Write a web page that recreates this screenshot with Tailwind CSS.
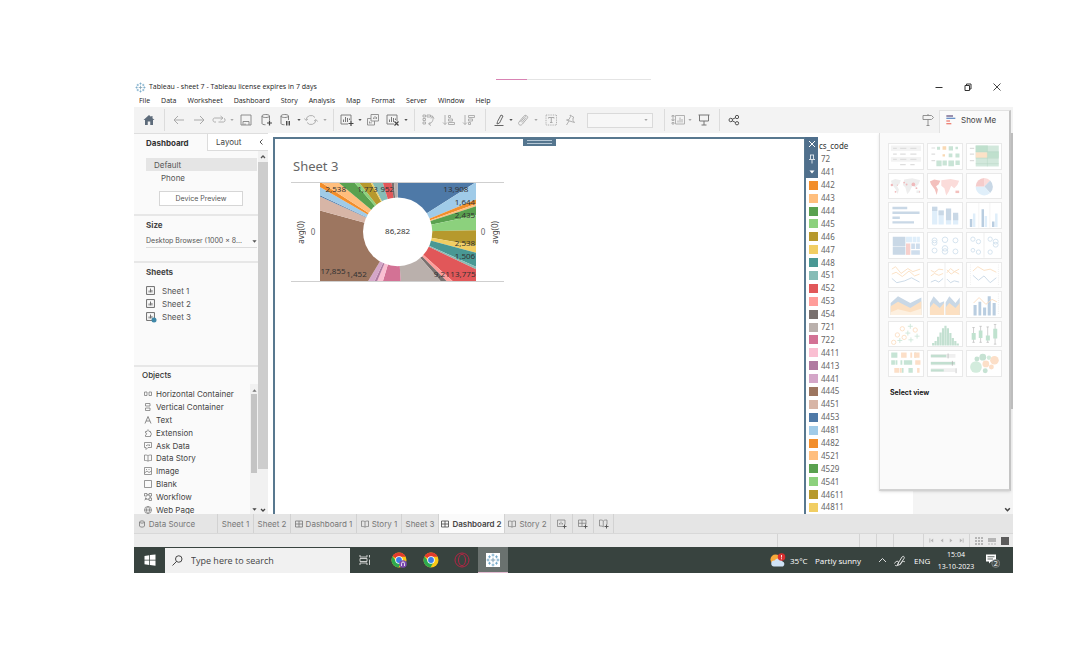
<!DOCTYPE html>
<html lang="en">
<head>
<meta charset="utf-8">
<title>Tableau - sheet 7</title>
<script src="https://cdn.jsdelivr.net/npm/@tailwindcss/browser@4"></script>
</head>
<body class="bg-white">
<svg class="hidden" aria-hidden="true">
  <defs>
    <symbol id="caret" viewBox="0 0 4 4"><path d="M.3 1h3.4L2 3z" fill="currentColor"/></symbol>
    <symbol id="grid4" viewBox="0 0 16 16"><path d="M1 2h14v12H1zM8 2v12M1 8h14" fill="none" stroke="currentColor" stroke-width="1.6"/></symbol>
    <symbol id="book" viewBox="0 0 16 16"><path d="M8 3.500C6.500 2 4 2 1 2v11c3 0 5.500 0 7 1.500C9.500 13 12 13 15 13V2c-3 0-5.500 0-7 1.500zM8 3.500v11" fill="none" stroke="currentColor" stroke-width="1.5"/></symbol>
    <symbol id="sheet" viewBox="0 0 16 16"><path d="M1 1h14v14H1z" fill="none" stroke="currentColor" stroke-width="1.5"/><path d="M5.500 11.500V8M8 11.500V4.500M10.500 11.500V7" stroke="currentColor" stroke-width="1.5"/></symbol>
    <symbol id="chartbox" viewBox="0 0 28 28"><path d="M22 16V4H2v18h14" fill="none" stroke="currentColor" stroke-width="1.8"/><path d="M7 18v-5M11 18V8M15 18v-8M19 14v-3" stroke="currentColor" stroke-width="2"/></symbol>
    <symbol id="cyl" viewBox="0 0 28 28"><path d="M4 6c0-4 15-4 15 0v8M4 6v15c0 1.500 3 2.500 7 2.500M4 6c0 4 15 4 15 0" fill="none" stroke="currentColor" stroke-width="1.8"/></symbol>
    <symbol id="tableau" viewBox="0 0 24 24"><path d="M12 8v8M8 12h8" stroke="#7d9db0" stroke-width="1.600"/><path d="M12 1v5M9.500 3.500h5M12 18v5M9.500 20.500h5M3.500 9.500v5M1 12h5M20.500 9.500v5M18 12h5M6 4v5M3.500 6.500h5M18 4v5M15.500 6.500h5M6 15v5M3.500 17.500h5M18 15v5M15.500 17.500h5" stroke="#5f9cc0" stroke-width="1.300"/></symbol>
    <symbol id="chrome" viewBox="0 0 32 32"><circle cx="16" cy="16" r="15" fill="#fbc916"/><path d="M16 16L3 8.500A15 15 0 0 1 29.500 9.500H16z" fill="#e33b2e"/><path d="M3 8.500A15 15 0 0 0 15 31l6.500-11.500L16 16l-5.500 3z" fill="#2da94f"/><circle cx="16" cy="16" r="7.500" fill="#fff"/><circle cx="16" cy="16" r="5.800" fill="#3a7ee8"/></symbol>
  </defs>
</svg>

<div class="min-h-screen pt-[79px] pb-[83px] pl-[134px] pr-[65px] flex flex-col font-['Inter',sans-serif] text-[8px] leading-[10px] text-[#555]">
  <div class="flex h-px ml-[362px] w-[155px] bg-[#e4e4e4]"><div class="w-[31px] bg-[#d883b3]"></div></div>

  <header class="font-['Open_Sans',sans-serif] text-[7px] text-[#222]">
    <div class="h-[14px] flex items-center">
      <svg class="w-[11px] h-[11px] ml-px mr-[3px]"><use href="#tableau"/></svg>
      <h1>Tableau - sheet 7 - Tableau license expires in 7 days</h1>
      <div class="ml-auto flex items-center gap-[19px] mr-[11px] text-[#333]">
        <button aria-label="Minimize"><svg class="block w-[10px] h-[10px]" viewBox="0 0 10 10"><path d="M1.500 5.500h7" stroke="currentColor"/></svg></button>
        <button aria-label="Restore"><svg class="block w-[10px] h-[10px]" viewBox="0 0 10 10" fill="none" stroke="currentColor"><path d="M2 3.500h4.500v5H2zM3.500 3.500V2H8v5H6.500"/></svg></button>
        <button aria-label="Close"><svg class="block w-[10px] h-[10px]" viewBox="0 0 10 10"><path d="M1.500 1.500l7 7M8.500 1.500l-7 7" stroke="currentColor" stroke-width=".9"/></svg></button>
      </div>
    </div>
    <nav class="h-[13px] flex items-center pl-[5px] gap-[11px]">
      <button>File</button><button>Data</button><button>Worksheet</button><button>Dashboard</button><button>Story</button><button>Analysis</button><button>Map</button><button>Format</button><button>Server</button><button>Window</button><button>Help</button>
    </nav>
  </header>

  <div class="h-[26px] bg-[#f3f3f3] flex items-center pl-2 text-[#a9a9a9] shrink-0">
    <button aria-label="Home" class="text-[#5d6b7a]"><svg class="w-[14px] h-[14px]" viewBox="0 0 28 28"><path d="M14 4L3 14h3v10h5.500v-7h5v7H22V14h3l-4-3.700V6h-2.500v2z" fill="currentColor"/></svg></button>
    <i class="w-px h-[22px] bg-[#dcdcdc] ml-2"></i>
    <button aria-label="Undo" class="ml-[7px]"><svg class="w-[14px] h-[14px]" viewBox="0 0 28 28" fill="none" stroke="currentColor" stroke-width="2"><path d="M24 14H5M12 6l-8 8 8 8"/></svg></button>
    <button aria-label="Redo" class="ml-[6px]"><svg class="w-[14px] h-[14px]" viewBox="0 0 28 28" fill="none" stroke="currentColor" stroke-width="2"><path d="M4 14h19M16 6l8 8-8 8"/></svg></button>
    <button aria-label="Replay" class="ml-[6px]"><svg class="w-[14px] h-[14px]" viewBox="0 0 28 28" fill="none" stroke="currentColor" stroke-width="1.800"><path d="M8 18H5c-4 0-4-8 0-8h16M17 6l5 4-5 4M13 18h10c4 0 4-7 1-7.500"/></svg></button>
    <svg class="w-1 h-1 ml-1"><use href="#caret"/></svg>
    <button aria-label="Save" class="ml-[5px] text-[#858585]"><svg class="w-[14px] h-[14px]" viewBox="0 0 28 28" fill="none" stroke="currentColor" stroke-width="1.800"><path d="M4 4h20v20H4zM8 24v-7h12v7M12 24v-3"/></svg></button>
    <button aria-label="New data source" class="ml-[7px] text-[#777]"><svg class="w-[14px] h-[14px]" viewBox="0 0 28 28"><use href="#cyl"/><path d="M19 15v10M14 20h10" stroke="#444" stroke-width="2.400"/></svg></button>
    <button aria-label="Pause updates" class="ml-[5px] text-[#777]"><svg class="w-[14px] h-[14px]" viewBox="0 0 28 28"><use href="#cyl"/><path d="M15.500 16v9M20.500 16v9" stroke="#444" stroke-width="2.800"/></svg></button>
    <svg class="w-1 h-1 ml-1 text-[#555]"><use href="#caret"/></svg>
    <button aria-label="Refresh" class="ml-[3px]"><svg class="w-[14px] h-[14px]" viewBox="0 0 28 28" fill="none" stroke="currentColor" stroke-width="1.800"><path d="M4 14a10 10 0 0 1 18-5M24 14a10 10 0 0 1-18 5M1 11l3 4 4-3M27 17l-3-4-4 3"/></svg></button>
    <svg class="w-1 h-1 ml-[5px]"><use href="#caret"/></svg>
    <i class="w-px h-[22px] bg-[#dcdcdc] ml-[6px]"></i>
    <button aria-label="New worksheet" class="ml-[6px] text-[#777]"><svg class="w-[14px] h-[14px]" viewBox="0 0 28 28"><use href="#chartbox"/><path d="M22 16v10M17 21h10" stroke="#444" stroke-width="2.400"/></svg></button>
    <svg class="w-1 h-1 ml-1 text-[#555]"><use href="#caret"/></svg>
    <button aria-label="Duplicate" class="ml-1 text-[#8a8a8a]"><svg class="w-[14px] h-[14px]" viewBox="0 0 28 28" fill="none" stroke="currentColor" stroke-width="1.800"><path d="M10 3h15v13H10zM10 11H3v13h14v-8M15 12V9M18 12V6M21 12V8M7 21v-4M10 21v-3"/></svg></button>
    <button aria-label="Clear sheet" class="ml-[6px] text-[#777]"><svg class="w-[14px] h-[14px]" viewBox="0 0 28 28"><use href="#chartbox"/><path d="M17 17l8 8M25 17l-8 8" stroke="#444" stroke-width="2.400"/></svg></button>
    <svg class="w-1 h-1 ml-1 text-[#555]"><use href="#caret"/></svg>
    <i class="w-px h-[22px] bg-[#dcdcdc] ml-[6px]"></i>
    <button aria-label="Swap" class="ml-[6px]"><svg class="w-[14px] h-[14px]" viewBox="0 0 28 28" fill="none" stroke="currentColor" stroke-width="1.800"><path d="M4 4h5v4H4zM12 4h7v4h-7zM4 11h5v4H4zM4 18h5v4H4zM19 6h4c3 6 0 14-7 16M19 18l-4 4 5 3M20 11l3-4 3 4"/></svg></button>
    <button aria-label="Sort ascending" class="ml-[7px]"><svg class="w-[14px] h-[14px]" viewBox="0 0 28 28" fill="none" stroke="currentColor" stroke-width="1.800"><path d="M6 4v19M2 19l4 4 4-4M13 5h4v4h-4zM13 12h8v4h-8zM13 19h12v4H13z"/></svg></button>
    <button aria-label="Sort descending" class="ml-[6px]"><svg class="w-[14px] h-[14px]" viewBox="0 0 28 28" fill="none" stroke="currentColor" stroke-width="1.800"><path d="M6 4v19M2 19l4 4 4-4M13 5h12v4H13zM13 12h8v4h-8zM13 19h4v4h-4z"/></svg></button>
    <i class="w-px h-[22px] bg-[#dcdcdc] ml-[9px]"></i>
    <button aria-label="Highlight" class="ml-[7px] text-[#666]"><svg class="w-[14px] h-[14px]" viewBox="0 0 28 28" fill="none" stroke="currentColor" stroke-width="2"><path d="M16 4l4 2-7 14-5 2 1-5zM3 25h18"/></svg></button>
    <svg class="w-1 h-1 ml-[2px] text-[#555]"><use href="#caret"/></svg>
    <button aria-label="Group" class="ml-[3px]"><svg class="w-[14px] h-[14px]" viewBox="0 0 28 28" fill="none" stroke="currentColor" stroke-width="1.800"><path d="M9 18l9-11c3-3 7 0 5 3L13 22c-4 5-10 1-7-4L15 7c2-3 5-3 6-1M12 19l8-10"/></svg></button>
    <svg class="w-1 h-1 ml-1"><use href="#caret"/></svg>
    <button aria-label="Show mark labels" class="ml-[6px]"><svg class="w-[14px] h-[14px]" viewBox="0 0 28 28" fill="none" stroke="currentColor" stroke-width="1.800"><path d="M4 4h21v20H4z" stroke-dasharray="2 1.500"/><path d="M9 11V9h11v2M14.500 9v10M12 19h5" stroke-width="2"/></svg></button>
    <button aria-label="Fix axes" class="ml-[5px]"><svg class="w-[14px] h-[14px]" viewBox="0 0 28 28" fill="none" stroke="currentColor" stroke-width="1.800"><path d="M14 4l8 5-2 1v5l3 4-16-5 5-1 3-6zM12 16l-5 8"/></svg></button>
    <div class="ml-[10px] h-[15px] w-[66px] border border-[#dadada] bg-[#f7f7f7] flex items-center justify-end pr-1">
      <select aria-label="Fit" class="appearance-none w-full h-full bg-transparent"><option></option></select>
      <svg class="w-1 h-1 shrink-0"><use href="#caret"/></svg>
    </div>
    <i class="w-px h-[22px] bg-[#dcdcdc] ml-[11px]"></i>
    <button aria-label="Show cards" class="ml-[6px]"><svg class="w-[14px] h-[14px]" viewBox="0 0 28 28" fill="none" stroke="currentColor" stroke-width="1.800"><path d="M2 5h4v3H2zM2 12h4v3H2zM2 19h4v3H2zM9 5h18v17H9zM14 19v-4M18 19V9M22 19v-7"/></svg></button>
    <svg class="w-1 h-1 ml-[3px]"><use href="#caret"/></svg>
    <button aria-label="Presentation mode" class="ml-[5px] text-[#777]"><svg class="w-[14px] h-[14px]" viewBox="0 0 28 28" fill="none" stroke="currentColor" stroke-width="2"><path d="M3 4h22M5 4v12h18V4M14 16v8M9 24h10"/></svg></button>
    <i class="w-px h-[22px] bg-[#dcdcdc] ml-2"></i>
    <button aria-label="Share" class="ml-[7px] text-[#555]"><svg class="w-[14px] h-[14px]" viewBox="0 0 28 28" fill="none" stroke="currentColor" stroke-width="2"><circle cx="7.500" cy="14" r="3.500"/><circle cx="20" cy="8" r="3.300"/><circle cx="20" cy="20.500" r="3.300"/><path d="M10.500 12.500l6.500-3M10.500 15.500l6.500 3.500"/></svg></button>
    <button aria-label="Guide" class="ml-auto text-[#888]"><svg class="w-[14px] h-[14px]" viewBox="0 0 28 28" fill="none" stroke="currentColor" stroke-width="1.800"><path d="M4 5h17l4 4-4 4H4zM14 2v3M14 13v12M11 25h6"/></svg></button>
    <button class="ml-1 mr-[2px] self-end h-[23px] w-[72px] bg-[#fafafa] border-l border-t border-[#e2e2e2] border-r-2 border-r-[#c4c4c4] flex items-center gap-[5px] pl-[6px] pb-1 text-[8px] text-[#444]">
      <svg class="w-[10px] h-[10px] shrink-0" viewBox="0 0 30 30"><path d="M1 3h20" stroke="#6b5b87" stroke-width="4"/><path d="M1 10h27" stroke="#6c93c9" stroke-width="4"/><path d="M1 18h11" stroke="#ee8377" stroke-width="4"/><path d="M1 26h15" stroke="#ee8377" stroke-width="4"/></svg>
      Show Me
    </button>
  </div>

  <main class="flex-1 min-h-0 flex relative overflow-hidden">
    <aside class="w-[134px] shrink-0 bg-[#fafafa] flex flex-col border-t border-[#dedede]">
      <div class="h-[17px] flex shrink-0">
        <button class="w-[73px] pl-[12px] text-left font-bold text-[#333]">Dashboard</button>
        <button class="flex-1 pl-2 text-left border-l border-b border-[#dcdcdc] bg-white text-[#444]">Layout</button>
        <button aria-label="Collapse" class="w-[14px] flex justify-center items-center border-b border-[#dcdcdc] bg-white"><svg class="w-[6px] h-[8px]" viewBox="0 0 6 8"><path d="M4.500 1.500L2 4l2.500 2.500" fill="none" stroke="#555"/></svg></button>
      </div>
      <div class="flex-1 flex min-h-0">
        <div class="flex-1 min-w-0 flex flex-col">
          <section class="h-[65px] pt-[7px] pl-3 pr-px border-b-2 border-[#e7e7e7]">
            <button class="block w-full h-[13px] bg-[#e5e5e5] text-left pl-2">Default</button>
            <button class="block w-full h-[13px] text-left pl-[15px]">Phone</button>
            <button class="block ml-[13px] mt-[7px] w-[84px] h-[15px] bg-white border border-[#d6d6d6] text-[7px]">Device Preview</button>
          </section>
          <section class="h-[47px] pt-[4px] pl-3 pr-px border-b-2 border-[#e7e7e7]">
            <label for="size" class="block font-bold text-[#444]">Size</label>
            <div class="flex items-center mt-[5px] h-[13px] border-b border-[#dcdcdc]">
              <select id="size" class="appearance-none flex-1 min-w-0 bg-transparent text-[7px]"><option>Desktop Browser (1000 x 8...</option></select>
              <svg class="w-[5px] h-[5px]"><use href="#caret"/></svg>
            </div>
          </section>
          <section class="h-[104px] pt-[4px] pl-3 border-b-2 border-[#e7e7e7]">
            <h2 class="font-bold text-[#444] mb-[7px]">Sheets</h2>
            <div class="flex items-center h-[13px] gap-[7px]"><svg class="w-[9px] h-[9px]"><use href="#sheet"/></svg>Sheet 1</div>
            <div class="flex items-center h-[13px] gap-[7px]"><svg class="w-[9px] h-[9px]"><use href="#sheet"/></svg>Sheet 2</div>
            <div class="flex items-center h-[13px] gap-[7px]"><svg class="w-[9px] h-[9px] overflow-visible"><use href="#sheet"/><circle cx="8" cy="8" r="2.500" fill="#3f88a8"/></svg>Sheet 3</div>
          </section>
          <section class="flex-1 min-h-0 flex flex-col pt-[3px]">
            <h2 class="font-medium text-[#333] pl-2 h-[14px]">Objects</h2>
            <div class="flex-1 flex min-h-0">
              <ul class="flex-1 flex flex-col pl-[10px] pt-[4px] -mb-[2px] text-[#444] *:flex *:flex-1 *:items-center *:gap-[4px] *:whitespace-nowrap">
                <li><svg class="w-2 h-2" viewBox="0 0 16 16" fill="none" stroke="#777" stroke-width="1.500"><path d="M1 4h5v7H1zM10 4h5v7h-5z"/></svg>Horizontal Container</li>
                <li><svg class="w-2 h-2" viewBox="0 0 16 16" fill="none" stroke="#777" stroke-width="1.500"><path d="M3 1h9v5H3zM3 10h9v5H3z"/></svg>Vertical Container</li>
                <li><svg class="w-2 h-2" viewBox="0 0 16 16" fill="none" stroke="#666" stroke-width="1.500"><path d="M2 15L8 1l6 14M4.500 10h7"/></svg>Text</li>
                <li><svg class="w-2 h-2" viewBox="0 0 16 16" fill="none" stroke="#777" stroke-width="1.500"><path d="M3 5h3c-1-4 5-4 4 0h3v3c4-1 4 5 0 4v3H3v-3c3 0 3-5 0-4z"/></svg>Extension</li>
                <li><svg class="w-2 h-2" viewBox="0 0 16 16" fill="none" stroke="#777" stroke-width="1.500"><path d="M1 1h14v10H8l-4 4v-4H1zM5 8V6M8 8V4M11 8V5"/></svg>Ask Data</li>
                <li><svg class="w-2 h-2 text-[#777]"><use href="#book"/></svg>Data Story</li>
                <li><svg class="w-2 h-2" viewBox="0 0 16 16" fill="none" stroke="#777" stroke-width="1.500"><path d="M1 1h14v14H1zM1 12l5-4 4 3 5-3M5 4v2M10 4v2"/></svg>Image</li>
                <li><svg class="w-2 h-2" viewBox="0 0 16 16" fill="none" stroke="#777" stroke-width="1.500"><path d="M1 1h14v14H1z"/></svg>Blank</li>
                <li><svg class="w-2 h-2" viewBox="0 0 16 16" fill="none" stroke="#777" stroke-width="1.500"><path d="M1 1h5v5H1zM10 1h5v5h-5zM10 10h5v5h-5zM6 3.500h4M12.500 6v4M10 12.500H3V9M1 14l5-4"/></svg>Workflow</li>
                <li><svg class="w-2 h-2" viewBox="0 0 16 16" fill="none" stroke="#777" stroke-width="1.500"><circle cx="8" cy="8" r="7"/><path d="M1 8h14M8 1c-4 3-4 11 0 14M8 1c4 3 4 11 0 14"/></svg>Web Page</li>
              </ul>
              <div class="w-2 bg-[#f1f1f1] flex flex-col items-center text-[#777]">
                <svg class="w-[5px] h-[5px] mt-1 mb-px rotate-180"><use href="#caret"/></svg>
                <div class="w-[6px] h-[79px] bg-[#c4c4c4]"></div>
                <svg class="w-[5px] h-[5px] mt-auto mb-[2px] text-[#444]"><use href="#caret"/></svg>
              </div>
            </div>
          </section>
        </div>
        <div class="w-[10px] bg-[#f1f1f1] flex flex-col items-center">
          <svg class="w-[6px] h-[6px] mt-[3px] mb-[2px]" viewBox="0 0 6 6"><path d="M1 4l2-2 2 2" fill="none" stroke="#555" stroke-width="1.300"/></svg>
          <div class="w-full h-[307px] bg-[#cdcdcd]"></div>
          <svg class="w-[6px] h-[6px] mt-auto mb-px" viewBox="0 0 6 6"><path d="M1 2l2 2 2-2" fill="none" stroke="#444" stroke-width="1.300"/></svg>
        </div>
      </div>
    </aside>

    <section class="ml-[5px] mt-[4px] w-[533px] shrink-0 border-2 border-b-0 border-[#58788f] relative font-['Noto_Sans',sans-serif]">
      <div class="absolute left-[248px] -top-[1px] w-[33px] h-[8px] bg-[#55768f] flex flex-col justify-center gap-[2px] px-1"><i class="h-px bg-[#b6c8d6]"></i><i class="h-px bg-[#b6c8d6]"></i></div>
      <h2 class="text-[13px] leading-[16px] text-[#666] pt-[19px] pl-[18px]">Sheet 3</h2>
      <div class="ml-4 mt-[8px] w-[213px] border-y border-[#cfcfcf] flex items-center text-[#666]">
        <span class="[writing-mode:vertical-rl] rotate-180 ml-[5px] w-[10px] text-[#444]">avg(0)</span>
        <span class="w-[14px] text-center">0</span>
        <svg class="w-[156px] h-[98px] font-['Noto_Sans',sans-serif]" viewBox="0 0 466 295" preserveAspectRatio="none">
          <g>
            <path fill="#4e79a7" d="M232 147V0H462z"/>
            <path fill="#a0cbe8" d="M232 147L462 0H466V50z"/>
            <path fill="#f28e2b" d="M232 147L466 50V63z"/>
            <path fill="#ffbe7d" d="M232 147L466 63V70z"/>
            <path fill="#59a14f" d="M232 147L466 70V97z"/>
            <path fill="#8cd17d" d="M232 147L466 97V142z"/>
            <path fill="#b6992d" d="M232 147L466 142V189z"/>
            <path fill="#f1ce63" d="M232 147L466 189V210z"/>
            <path fill="#499894" d="M232 147L466 210V252z"/>
            <path fill="#86bcb6" d="M232 147L466 252V260z"/>
            <path fill="#e15759" d="M232 147L466 260V295H396z"/>
            <path fill="#ff9d9a" d="M232 147L396 295H378z"/>
            <path fill="#79706e" d="M232 147L378 295H360z"/>
            <path fill="#bab0ac" d="M232 147L360 295H241z"/>
            <path fill="#d37295" d="M232 147L241 295H188z"/>
            <path fill="#fabfd2" d="M232 147L188 295H171z"/>
            <path fill="#b07aa1" d="M232 147L171 295H163z"/>
            <path fill="#d4a6c8" d="M232 147L163 295H144z"/>
            <path fill="#9d7660" d="M232 147L144 295H0V83z"/>
            <path fill="#d7b5a6" d="M232 147L0 83V41z"/>
            <path fill="#4e79a7" d="M232 147L0 41V37z"/>
            <path fill="#a0cbe8" d="M232 147L0 37V12z"/>
            <path fill="#f28e2b" d="M232 147L0 12V0H6z"/>
            <path fill="#ffbe7d" d="M232 147L6 0H57z"/>
            <path fill="#59a14f" d="M232 147L57 0H104z"/>
            <path fill="#8cd17d" d="M232 147L104 0H118z"/>
            <path fill="#b6992d" d="M232 147L118 0H152z"/>
            <path fill="#f1ce63" d="M232 147L152 0H157z"/>
            <path fill="#86bcb6" d="M232 147L157 0H188z"/>
            <path fill="#e15759" d="M232 147L188 0H214z"/>
            <path fill="#79706e" d="M232 147L214 0H221z"/>
            <path fill="#bab0ac" d="M232 147L221 0H232z"/>
            <circle cx="232" cy="147" r="103.500" fill="#fff"/>
          </g>
          <g font-size="24" fill="#333" text-anchor="middle">
            <text x="232" y="155">86,282</text><text x="47" y="28">2,538</text><text x="142" y="28">1,773</text><text x="201" y="28">952</text><text x="406" y="28">13,908</text>
            <text x="433" y="67">1,644</text><text x="433" y="106">2,435</text><text x="433" y="190">2,538</text><text x="433" y="230">1,506</text><text x="427" y="284">13,775</text><text x="364" y="284">9,21</text><text x="39" y="275">17,855</text><text x="109" y="284">1,452</text>
          </g>
        </svg>
        <span class="w-[14px] text-center">0</span>
        <span class="[writing-mode:vertical-rl] rotate-180 w-[10px] text-[#444]">avg(0)</span>
      </div>
      <div class="absolute left-[530px] -top-[2px] z-10 w-[13px] h-[41px] bg-[#4f6f8c] flex flex-col items-center justify-between py-[3px]">
        <button aria-label="Remove"><svg class="block w-2 h-2" viewBox="0 0 8 8"><path d="M1 1l6 6M7 1L1 7" stroke="#fff"/></svg></button>
        <button aria-label="Pin"><svg class="block w-2 h-[10px]" viewBox="0 0 8 10"><path d="M2 1h4M2.500 1v4M5.500 1v4M1 5.500h6M4 5.500V9.500" stroke="#e6edf3" fill="none" stroke-width=".9"/></svg></button>
        <button aria-label="More"><svg class="block w-[6px] h-[6px] text-white"><use href="#caret"/></svg></button>
      </div>
    </section>

    <section class="w-[107px] shrink-0 bg-white pl-[3px] pt-[8px] flex flex-col font-['Noto_Sans',sans-serif] text-[#666]">
      <h3 class="pl-[10px] h-[12px] text-[#333]">cs_code</h3>
      <ul id="legend" class="flex-1 flex flex-col"></ul>
    </section>
    <div class="flex-1 bg-[#f4f4f4] flex items-end justify-end pr-[2px] pb-[1px]"><svg class="w-[7px] h-[7px]" viewBox="0 0 6 6"><path d="M1 2l2 2 2-2" fill="none" stroke="#444" stroke-width="1.300"/></svg></div>

    <aside class="absolute right-[2px] top-0 w-[132px] h-[358px] bg-[#fafafa] border-l border-[#dedede] border-r-2 border-r-[#c4c4c4] border-b-2 border-b-[#d2d2d2] shadow pl-2 pt-[10px]">
      <div class="grid grid-cols-3 grid-rows-8 gap-[3px] w-[114px] h-[234px] *:min-h-0 *:bg-white *:border *:border-[#e9e9e9] *:w-full *:h-full">
        <svg viewBox="0 0 108 80"><path d="M5 5h98v18H5zM5 42h98v16H5z" fill="#f3f3f3"/><path d="M12 14h12M35 14h20M68 14h20M12 33h12M35 33h18M68 33h20M12 50h12M35 50h20M68 50h20M35 67h18M68 67h14" stroke="#dedede" stroke-width="4"/></svg>
        <svg viewBox="0 0 108 80"><path d="M10 13h12M10 33h12M10 54h12" stroke="#ddd" stroke-width="4"/><g fill="#c9e4d6"><path d="M28 9h10v10H28zM66 7h14v14H66zM88 9h8v8h-8zM66 31h12v12H66zM88 31h13v13H88zM26 54h17v18H26zM46 54h14v16H46zM65 54h18v18H65zM88 54h14v14H88z"/></g><g fill="#f9d9b4"><path d="M46 7h12v12H46zM46 33h8v8h-8z"/></g></svg>
        <svg viewBox="0 0 108 80"><path d="M8 14h14M8 33h14M8 54h14" stroke="#ddd" stroke-width="4"/><path d="M27 5h75v68H27z" fill="#d2e8dc"/><path d="M27 5h38v20H27zM65 25h37v20H65z" fill="#bfe0cd"/><path d="M27 27h38v18H27z" fill="#fce2c7"/><path d="M27 25h75M27 46h75M27 64h75M65 5v68" stroke="#b4d6c3" stroke-width="1.500"/></svg>
        <svg viewBox="0 0 108 80"><path d="M5 22l14-6 18 4-4 12-8 8 6 10-4 16-6-16-12-16zM48 18l26-4 26 6-6 14-10 10-8-8-10 20-8 10-6-22-8-8zM88 54h12v8H88z" fill="#eee"/><g fill="#efb9bb"><circle cx="8" cy="36" r="4"/><circle cx="20" cy="58" r="3"/><circle cx="48" cy="28" r="3"/><circle cx="56" cy="34" r="3"/><circle cx="78" cy="34" r="6"/><circle cx="88" cy="46" r="3"/><circle cx="26" cy="36" r="2"/><circle cx="98" cy="58" r="2"/></g></svg>
        <svg viewBox="0 0 108 80"><path d="M5 24l14-6 20 4-6 12-8 6 6 10-4 18-6-18-12-16z" fill="#f3c0bd"/><path d="M42 20l30-4 28 6-6 14-10 10-10-8-8 20-8 12-6-24-10-8z" fill="#fbdcda"/><path d="M88 54h12v8H88z" fill="#f3c0bd"/></svg>
        <svg viewBox="0 0 108 80"><path d="M55 41V13A28 28 0 0 1 74 21z" fill="#fbdcda"/><path d="M55 41L74 21A28 28 0 0 1 74 62z" fill="#c9d8e6"/><path d="M55 41L74 62A28 28 0 0 1 27 41z" fill="#e0effa"/><path d="M55 41H27A28 28 0 0 1 55 13z" fill="#f5cccb"/></svg>
        <svg viewBox="0 0 108 80"><path d="M10 16h48M10 32h88M10 48h24M10 63h70" stroke="#c9d8e6" stroke-width="8"/></svg>
        <svg viewBox="0 0 108 80"><path d="M12 12h17v58H12zM33 24h17v46H33zM57 55h17v15H57zM80 40h17v30H80z" fill="#dfeefa"/><path d="M12 12h17v14H12zM33 24h17v16H33zM57 18h17v38H57zM80 32h17v24H80z" fill="#c9d8e6"/></svg>
        <svg viewBox="0 0 108 80"><path d="M37 0v80M73 0v80" stroke="#eee" stroke-width="2"/><path d="M8 52h8v26H8zM46 20h8v58h-8zM80 60h8v18h-8z" fill="#b9cde0"/><path d="M18 34h8v44h-8zM56 42h8v36h-8zM90 34h8v44h-8z" fill="#dfeefa"/></svg>
        <svg viewBox="0 0 108 80"><path d="M11 12h41v30H11zM11 44h41v27H11z" fill="#c9d8e6"/><path d="M54 12h20v18H54zM76 12h12v18H76zM90 12h9v18h-9z" fill="#dfeefa"/><path d="M54 34h14v37H54z" fill="#f7d0cc"/><path d="M71 34h12v18H71zM86 34h13v18H86zM71 56h28v15H71z" fill="#cfdeed"/></svg>
        <svg viewBox="0 0 108 80" fill="none" stroke="#d3e2ee" stroke-width="3"><circle cx="20" cy="24" r="8"/><circle cx="20" cy="32" r="8"/><circle cx="20" cy="57" r="8"/><circle cx="54" cy="22" r="9"/><circle cx="54" cy="50" r="9"/><circle cx="54" cy="60" r="9"/><circle cx="88" cy="24" r="8"/><circle cx="88" cy="60" r="8"/></svg>
        <svg viewBox="0 0 108 80" fill="none" stroke="#d3e2ee" stroke-width="3"><path d="M54 0v80" stroke="#eee"/><circle cx="18" cy="20" r="7"/><circle cx="36" cy="28" r="7"/><circle cx="18" cy="56" r="6"/><circle cx="36" cy="62" r="7"/><circle cx="74" cy="20" r="7"/><circle cx="92" cy="28" r="8"/><circle cx="92" cy="38" r="8"/><circle cx="74" cy="62" r="7"/></svg>
        <svg viewBox="0 0 108 80" fill="none" stroke-width="3"><path d="M8 20l12-8 18 22 22-16 16 10 24-8M8 36l14-6 20 14 22-18 18 16 16-6" stroke="#fbe0c2"/><path d="M8 50l16 14 26-6 22-10 26 14" stroke="#c9d8e6"/></svg>
        <svg viewBox="0 0 108 80" fill="none" stroke-width="3"><path d="M54 0v80" stroke="#eee"/><path d="M8 24l12 6 14-10 14 2M8 42l12-8 14 6 14-6M60 32l12-14 12 10 16-8M60 22l14 14 12-8 14 8" stroke="#fbe0c2"/><path d="M8 62l14-6 12 6 14-12M60 52l12 12 12-6 16 4" stroke="#c9d8e6"/></svg>
        <svg viewBox="0 0 108 80" fill="none" stroke-width="3"><path d="M18 26l16-14 20 12 20-4 20 10" stroke="#fbe0c2"/><path d="M18 40l18 16 18-14 20 22 20-16" stroke="#c9d8e6"/><path d="M10 5v70M101 5v70" stroke="#eee" stroke-dasharray="3 4"/></svg>
        <svg viewBox="0 0 108 80"><path d="M4 36L28 14l40 22 36-18v57H4z" fill="#c9d8e6"/><path d="M4 46l24-14 40 20 36-22v45H4z" fill="#fce0c2"/><path d="M4 66l24-10 40 10 36-12v21H4z" fill="#fdf0e0"/></svg>
        <svg viewBox="0 0 108 80"><path d="M5 36l12-22 20 22 14-6v45H5zM56 34l12-20 20 22 14-18v57H56z" fill="#c9d8e6"/><path d="M5 50l12-14 20 16 14-16v39H5zM56 50l12-14 20 16 14-16v39H56z" fill="#fce0c2"/></svg>
        <svg viewBox="0 0 108 80"><path d="M20 42h10v34H20zM36 32h9v44h-9zM51 50h10v26H51zM66 14h10v62H66zM82 36h10v40H82z" fill="#b9cde0"/><path d="M20 36l18-18 22 22 20-16 16 8" fill="none" stroke="#fbdcc0" stroke-width="3"/><path d="M101 5v70" stroke="#eee" stroke-width="4" stroke-dasharray="3 4"/></svg>
        <svg viewBox="0 0 108 80" fill="none" stroke-width="3"><g stroke="#fcdfc4"><circle cx="42" cy="22" r="7"/><circle cx="26" cy="42" r="7"/><circle cx="48" cy="50" r="7"/><circle cx="14" cy="66" r="7"/><circle cx="84" cy="26" r="7"/></g><path d="M60 14h16M68 6v16M52 36h16M60 28v16M82 46h16M90 38v16M26 60h16M34 52v16M62 58h16M70 50v16" stroke="#cfe7da"/></svg>
        <svg viewBox="0 0 108 80"><path d="M12 68h7v8h-7zM20 62h7v14h-7zM28 48h7v28h-7zM36 34h7v42h-7zM44 20h7v56h-7zM52 12h7v64h-7zM60 20h7v56h-7zM68 36h7v40h-7zM76 52h7v24h-7zM84 62h7v14h-7zM92 70h7v6h-7z" fill="#c3e0d1"/></svg>
        <svg viewBox="0 0 108 80"><path d="M20 18v48M43 14v52M66 16v50M90 8v64M16 18h8M16 66h8M39 14h8M39 66h8M62 16h8M62 66h8M86 8h8M86 72h8" stroke="#b4b4b4" stroke-width="2"/><path d="M14 36h13v22H14zM37 28h12v24H37zM60 44h13v16H60zM84 22h13v32H84z" fill="#c0e2cf"/></svg>
        <svg viewBox="0 0 108 80"><g fill="#c6e4d5"><path d="M6 5h20v17H6zM82 5h5v17h-5zM6 30h12v15H6zM20 30h6v15h-6zM36 30h6v15h-6zM47 30h27v15H47zM40 55h6v16h-6zM62 55h14v16H62z"/></g><g fill="#fcdfc8"><path d="M38 5h18v17H38zM68 5h6v17h-6zM80 5h18v17H80zM84 30h17v15H84zM16 55h16v16H16zM34 55h6v16h-6zM90 55h8v16h-8z"/></g></svg>
        <svg viewBox="0 0 108 80"><path d="M8 10h80v12H8zM8 34h80v12H8zM8 56h80v12H8z" fill="#f0f0f0"/><path d="M8 16h50M8 40h78M8 63h42" stroke="#c2dfd0" stroke-width="8"/><path d="M64 8v16M78 32v16M90 56v16" stroke="#aaa" stroke-width="2"/></svg>
        <svg viewBox="0 0 108 80"><g fill="#d3ecdd"><circle cx="28" cy="52" r="19"/><circle cx="70" cy="22" r="7"/></g><g fill="#c6e2d3"><circle cx="50" cy="20" r="11"/><circle cx="31" cy="26" r="8"/><circle cx="58" cy="64" r="8"/></g><g fill="#fcdfc8"><circle cx="88" cy="30" r="14"/><circle cx="60" cy="42" r="11"/><circle cx="78" cy="52" r="8"/></g></svg>
      </div>
      <p class="mt-[11px] pl-[2px] text-[7px] font-bold text-[#222]">Select view</p>
    </aside>
    <i class="absolute right-0 top-0 w-[2px] h-[276px] bg-[#bdbdbd]"></i>
  </main>

  <nav class="h-5 shrink-0 bg-[#e5e5e5] flex text-[#777] border-b border-[#d8d8d8] *:flex *:items-center *:justify-center *:gap-[3px] *:pt-px *:border-r *:border-[#d2d2d2] *:whitespace-nowrap">
    <button class="w-[84px] pr-[18px]"><svg class="w-[8px] h-[8px]" viewBox="0 0 16 16" fill="none" stroke="currentColor" stroke-width="1.600"><path d="M3 4c0-3 10-3 10 0v8c0 3-10 3-10 0zM3 4c0 3 10 3 10 0"/></svg>Data Source</button>
    <button class="w-[36px]">Sheet 1</button>
    <button class="w-[37px]">Sheet 2</button>
    <button class="w-[66px]"><svg class="w-[8px] h-[8px]"><use href="#grid4"/></svg>Dashboard 1</button>
    <button class="w-[45px]"><svg class="w-[8px] h-[8px]"><use href="#book"/></svg>Story 1</button>
    <button class="w-[37px]">Sheet 3</button>
    <button class="w-[66px] bg-[#fafafa] font-semibold text-[#444]"><svg class="w-[8px] h-[8px]"><use href="#grid4"/></svg>Dashboard 2</button>
    <button class="w-[46px]"><svg class="w-[8px] h-[8px]"><use href="#book"/></svg>Story 2</button>
    <button aria-label="New worksheet" class="w-[22px]"><svg class="w-[10px] h-[10px]" viewBox="0 0 20 20"><path d="M16 11V2H1v13h10M5 11V8M8 11V5M11 11V8" fill="none" stroke="currentColor" stroke-width="1.400"/><path d="M15 11v8M11 15h8" stroke="#555" stroke-width="1.900"/></svg></button>
    <button aria-label="New dashboard" class="w-[21px]"><svg class="w-[10px] h-[10px]" viewBox="0 0 20 20"><path d="M16 11V2H1v13h10M8 2v13M1 8.500h15" fill="none" stroke="currentColor" stroke-width="1.400"/><path d="M15 11v8M11 15h8" stroke="#555" stroke-width="1.900"/></svg></button>
    <button aria-label="New story" class="w-[20px]"><svg class="w-[10px] h-[10px]" viewBox="0 0 20 20"><path d="M16 11V2c-4 0-6 0-7.500 2C7 2 5 2 1 2v12c4 0 6 0 7.500 2V4" fill="none" stroke="currentColor" stroke-width="1.400"/><path d="M15 11v8M11 15h8" stroke="#555" stroke-width="1.900"/></svg></button>
  </nav>
  <div class="h-[13px] shrink-0 bg-[#ebebeb] flex justify-end text-[#b5b5b5] *:border-l *:border-[#d4d4d4] *:flex *:items-center">
    <i class="w-[82px]"></i><i class="w-[17px]"></i><i class="w-[17px]"></i><i class="w-[30px]"></i>
    <div class="w-[46px] justify-around px-[2px]">
      <button aria-label="First"><svg class="block w-[5px] h-[5px]" viewBox="0 0 6 6"><path d="M1 .5v5" stroke="currentColor"/><path d="M5 .5v5L2 3z" fill="currentColor"/></svg></button>
      <button aria-label="Previous"><svg class="block w-[5px] h-[5px]" viewBox="0 0 6 6"><path d="M5 .5v5L2 3z" fill="currentColor"/></svg></button>
      <button aria-label="Next"><svg class="block w-[5px] h-[5px]" viewBox="0 0 6 6"><path d="M1 .5v5L4 3z" fill="currentColor"/></svg></button>
      <button aria-label="Last"><svg class="block w-[5px] h-[5px]" viewBox="0 0 6 6"><path d="M5 .5v5" stroke="currentColor"/><path d="M1 .5v5L4 3z" fill="currentColor"/></svg></button>
    </div>
    <div class="w-[44px] justify-between pl-[5px] pr-[4px]">
      <button aria-label="Tabs"><svg class="block w-[8px] h-[8px]" viewBox="0 0 8 8"><path d="M0 1h8M0 4h8M0 7h8" stroke="currentColor" stroke-width="2" stroke-dasharray="2 1"/></svg></button>
      <button aria-label="Filmstrip"><svg class="block w-[8px] h-[8px]" viewBox="0 0 8 8"><path d="M0 1h8v4H0z" fill="currentColor"/><path d="M0 7h8" stroke="currentColor" stroke-dasharray="2 1"/></svg></button>
      <button aria-label="Sheet view"><svg class="block w-[8px] h-[8px]" viewBox="0 0 8 8"><path d="M0 0h8v8H0z" fill="#5c5c5c"/></svg></button>
    </div>
  </div>

  <footer class="h-[26px] shrink-0 bg-[#38433f] flex items-center text-white font-['Open_Sans',sans-serif]">
    <button aria-label="Start" class="w-[31px] flex justify-center"><svg class="w-[12px] h-[12px]" viewBox="0 0 24 24"><path d="M1 4l9.500-1.500v9H1zM12 2.200L23 1v10.500H12zM1 13h9.500v9L1 20.500zM12 13h11v10.500L12 22.200z" fill="#fff"/></svg></button>
    <label class="w-[185px] h-[25px] bg-[#f1f1f1] flex items-center pl-[7px] pt-px gap-2">
      <svg class="w-[11px] h-[11px] shrink-0" viewBox="0 0 22 22" fill="none" stroke="#333" stroke-width="1.800"><circle cx="13.500" cy="8" r="6.500"/><path d="M9 13l-8 8"/></svg>
      <input type="text" placeholder="Type here to search" aria-label="Type here to search" class="flex-1 min-w-0 bg-transparent text-[9px] placeholder:text-[#444]">
    </label>
    <button aria-label="Task view" class="w-[30px] flex justify-center"><svg class="w-[12px] h-[12px]" viewBox="0 0 24 24" fill="none" stroke="#ddd" stroke-width="1.800"><path d="M2 2v4h14V2M2 9h14v6H2zM2 22v-4h14v4M21 2v5M21 11v11"/></svg></button>
    <button aria-label="Chrome profile" class="ml-[3px] w-[32px] flex justify-center"><svg class="w-[16px] h-[16px]" viewBox="0 0 32 32"><use href="#chrome"/><circle cx="24" cy="24" r="7.500" fill="#7b4bb0"/><path d="M21 28v-5a3 3 0 0 1 6 0v5" fill="none" stroke="#fff" stroke-width="1.600"/></svg></button>
    <button aria-label="Chrome" class="w-[31px] flex justify-center"><svg class="w-[16px] h-[16px]"><use href="#chrome"/></svg></button>
    <button aria-label="Opera" class="w-[31px] flex justify-center"><svg class="w-[16px] h-[16px]" viewBox="0 0 32 32" fill="none" stroke="#b32644" stroke-width="2"><circle cx="16" cy="16" r="14"/><ellipse cx="16" cy="16" rx="7" ry="11.500"/></svg></button>
    <button aria-label="Tableau" class="ml-px w-[30px] h-full flex justify-center items-center bg-[#6a726f] border-b border-[#e3bcd2]"><svg class="w-[14px] h-[14px] bg-white"><use href="#tableau"/></svg></button>
    <div class="ml-auto flex items-center pt-px text-[8px] whitespace-nowrap">
      <svg class="w-[16px] h-[15px] mr-1" viewBox="0 0 32 30"><circle cx="11" cy="13" r="10" fill="#f7a93b"/><path d="M8 27a6 6 0 0 1 1-12 9 9 0 0 1 16 2 5.500 5.500 0 0 1 1 10z" fill="#cfe2f5"/><circle cx="23" cy="8" r="7.500" fill="#d92f2f"/><path d="M23 4v5M23 10.500v2" stroke="#fff" stroke-width="1.800"/></svg>
      <span class="w-[25px]">35°C</span><span class="w-[63px]">Partly sunny</span>
      <svg class="w-[9px] h-[9px] mr-[7px]" viewBox="0 0 18 18"><path d="M2 12l7-7 7 7" fill="none" stroke="#eee" stroke-width="1.800"/></svg>
      <svg class="w-[12px] h-[12px] mr-[8px]" viewBox="0 0 24 24" fill="none" stroke="#eee" stroke-width="1.800"><path d="M8 17L16 4c3-3 6 0 4 3L12 19l-5 2zM1 17c2-5 8-6 8-2s-4 9-7 5M13 19c1-5 6-8 9-5"/></svg>
      <span class="w-[23px]">ENG</span>
      <div class="w-[38px] text-center text-[7px] leading-[12px]">15:04<br>13-10-2023</div>
      <svg class="w-[15px] h-[15px] ml-[10px] mr-[13px]" viewBox="0 0 30 30"><path d="M2 3h20v14H12l-4 4v-4H2z" fill="#fff"/><path d="M5 7.500h14M5 12h11" stroke="#38433f" stroke-width="1.600"/><circle cx="21.500" cy="21" r="8" fill="#4a5350" stroke="#aaa"/><text x="21.500" y="26" font-size="14" fill="#fff" text-anchor="middle">2</text></svg>
    </div>
  </footer>
</div>

<script>
  const legend = [
    ['72', '#4e79a7'], ['441', '#a0cbe8'], ['442', '#f28e2b'], ['443', '#ffbe7d'], ['444', '#59a14f'],
    ['445', '#8cd17d'], ['446', '#b6992d'], ['447', '#f1ce63'], ['448', '#499894'], ['451', '#86bcb6'],
    ['452', '#e15759'], ['453', '#ff9d9a'], ['454', '#79706e'], ['721', '#bab0ac'], ['722', '#d37295'],
    ['4411', '#fabfd2'], ['4413', '#b07aa1'], ['4441', '#d4a6c8'], ['4445', '#9d7660'], ['4451', '#d7b5a6'],
    ['4453', '#4e79a7'], ['4481', '#a0cbe8'], ['4482', '#f28e2b'], ['4521', '#ffbe7d'], ['4529', '#59a14f'],
    ['4541', '#8cd17d'], ['44611', '#b6992d'], ['44811', '#f1ce63']
  ];
  document.getElementById('legend').innerHTML = legend.map(([code, colour]) =>
    `<li class="flex-1 flex items-center gap-[3px]"><i class="w-[9px] h-[9px]" style="background:${colour}"></i>${code}</li>`).join('');
</script>
</body>
</html>
